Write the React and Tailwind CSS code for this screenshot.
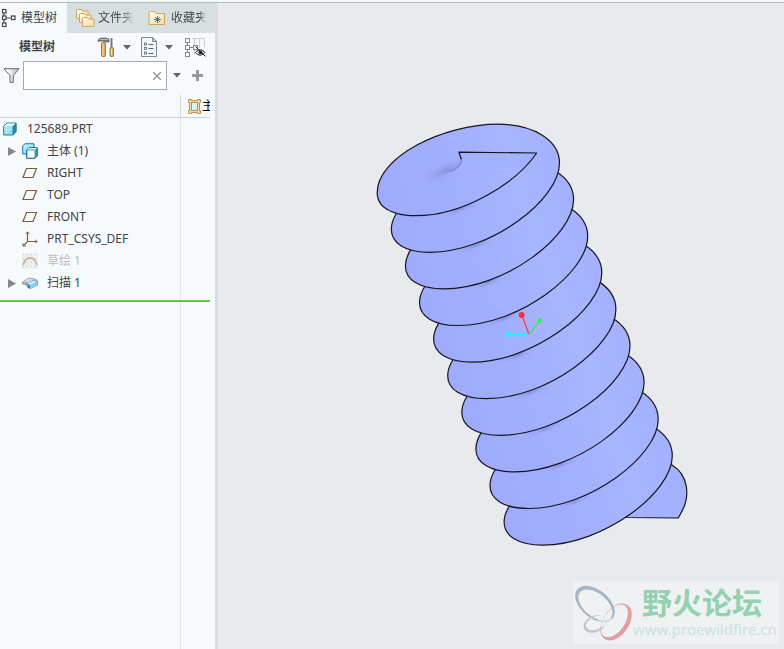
import React from "react";

const Caret = () => (
  <svg viewBox="0 0 8 5" className="h-[5px] w-2 shrink-0" fill="#5e6367">
    <path d="M0 0h8L4 4.500z" />
  </svg>
);

const TreeTabIcon = () => (
  <svg viewBox="0 0 16 20" className="h-5 w-4 shrink-0" fill="#fff" stroke="#44484b" strokeWidth="1.200">
    <path d="M4 5v3M4 12v3M6 10h5" />
    <rect x="2.500" y="1.500" width="3.500" height="3.500" />
    <rect x="2.500" y="8" width="3.500" height="3.500" />
    <rect x="11.500" y="8" width="3.500" height="3.500" />
    <rect x="2.500" y="15" width="3.500" height="3.500" />
  </svg>
);

const Gold = () => (
  <defs>
    <linearGradient id="gold" x1="0" y1="0" x2="0.6" y2="1">
      <stop offset="0" stopColor="#fffdf2" />
      <stop offset="1" stopColor="#f8e0aa" />
    </linearGradient>
    <linearGradient id="aqua" x1="0" y1="0" x2="1" y2="1">
      <stop offset="0" stopColor="#c5f4fd" />
      <stop offset="1" stopColor="#7cd0ee" />
    </linearGradient>
  </defs>
);

const FoldersIcon = () => (
  <svg viewBox="0 0 20 20" className="size-5 shrink-0" fill="url(#gold)" stroke="#cfa45c" strokeWidth="1">
    <Gold />
    <path d="M1.500 10.500v-8l1-1h4l1 1.500h5.500v7.500z" />
    <path d="M4.500 14.500v-8l1-1h4l1 1.500h5.500v7.500z" />
    <path d="M7.500 18.500v-8l1-1h4l1 1.500h5.500v7.500z" />
  </svg>
);

const FavoriteIcon = () => (
  <svg viewBox="0 0 18 16" className="h-4 w-[18px] shrink-0">
    <path d="M1 14.500V2.500l1-1h5l1 2h8.500v11z" fill="url(#gold)" stroke="#cfa45c" />
    <path d="M9.500 6v7M6 9.500h7M7 7l5 5M12 7l-5 5" stroke="#126a8d" strokeWidth=".8" />
  </svg>
);

const ToolsIcon = () => (
  <svg viewBox="0 0 18 22" className="h-[22px] w-[18px] shrink-0">
    <path d="M1 5.500c0-2.500 2-3.500 4-3.500h4l3 1v3H8L6 5H4z" fill="#747b82" stroke="#4d5256" strokeWidth=".6" />
    <path d="M3 3.500h8" stroke="#b8bec3" />
    <rect x="4.500" y="6.500" width="4" height="14" rx="1" fill="#d9aa5e" stroke="#8b6429" strokeWidth=".8" />
    <path d="M6 7.500v12" stroke="#f8dfa6" />
    <path d="M14.500 2v9" stroke="#747b82" strokeWidth="2" />
    <rect x="13" y="11.500" width="3.500" height="9" rx="1" fill="#d9aa5e" stroke="#8b6429" strokeWidth=".8" />
    <path d="M14.500 13v6" stroke="#f8dfa6" />
  </svg>
);

const ListPageIcon = () => (
  <svg viewBox="0 0 16 20" className="h-5 w-4 shrink-0" fill="none">
    <path d="M.5.500h11l4 4v15H.5z" fill="#f1f8fb" stroke="#81898e" />
    <path d="M11.500.500v4h4z" fill="#cfd6da" stroke="#81898e" />
    <g fill="#fff" stroke="#5c646a" strokeWidth=".8">
      <rect x="3.500" y="6" width="2" height="2" />
      <rect x="3.500" y="10.500" width="2" height="2" />
      <rect x="3.500" y="15" width="2" height="2" />
    </g>
    <path d="M7.500 7.500h5M7.500 11.500h5M7.500 16.500h5" stroke="#5c646a" />
  </svg>
);

const HiddenTreeIcon = () => (
  <svg viewBox="0 0 21 21" className="size-[21px] shrink-0" fill="none">
    <path d="M7 1.500h13M9.500 2v16M14.500 2v9M19.500 2v8" stroke="#cdd0d2" />
    <g stroke="#858a8d" fill="#f7f9fc">
      <path d="M2.500 5v4M2.500 12v4M5 10.500h5" />
      <rect x=".5" y="1.500" width="4" height="4" />
      <rect x=".5" y="8.500" width="4" height="4" />
      <rect x="8.500" y="8.500" width="4" height="4" />
      <rect x=".5" y="15.500" width="4" height="4" />
    </g>
    <path d="M10.500 15.500c2.500-3.500 7-3.500 9.500 0-2.500 3.500-7 3.500-9.500 0z" fill="#dfe2e4" stroke="#222" strokeWidth="1" />
    <circle cx="15.500" cy="15.300" r="1.900" fill="#222" />
    <path d="M10.500 9.500l10 10" stroke="#222" strokeWidth="1" />
  </svg>
);

const FunnelIcon = () => (
  <svg viewBox="0 0 17 15" className="h-[15px] w-[17px] shrink-0">
    <defs>
      <linearGradient id="funnel">
        <stop offset=".2" stopColor="#fff" />
        <stop offset="1" stopColor="#b5babd" />
      </linearGradient>
    </defs>
    <path d="M1 .700h15L10.300 7.500v6.800H7V7.500z" fill="url(#funnel)" stroke="#62686c" />
  </svg>
);

const BodyColumnIcon = () => (
  <svg viewBox="0 0 13 15" className="h-[15px] w-[13px] shrink-0">
    <path d="M.500.500h3v1h6v-1h3v3h-1v8h1v3h-3v-1h-6v1h-3v-3h1v-8h-1z" fill="#f2d9a2" stroke="#a9823f" strokeWidth=".8" />
    <rect x="3.500" y="3.500" width="6" height="8" fill="#d5f4fb" stroke="#a9823f" strokeWidth=".8" />
  </svg>
);

const PartIcon = () => (
  <svg viewBox="0 0 14 14" className="size-[14px] shrink-0" strokeLinejoin="round">
    <path d="M.700 4L4 1h9v8.500L10 13H.700z" fill="url(#aqua)" stroke="#237ca3" />
    <path d="M10 4l3-3v8.500L10 13z" fill="#288cb5" stroke="#1c6b90" strokeWidth=".7" />
    <path d="M1.500 4H10l2.500-2.500H4.500z" fill="#dafaff" />
  </svg>
);

const BodyIcon = () => (
  <svg viewBox="0 0 16 16" className="size-4 shrink-0" strokeLinejoin="round">
    <path d="M.700 3L3 .700h9v8L10 11H.700z" fill="url(#aqua)" stroke="#237ca3" />
    <path d="M4.700 7L7 4.700h8.300V13L13 15.300H4.700z" fill="#3c9dc3" stroke="#1c6b90" />
    <path d="M5 7l2-2h8l-2 2z" fill="#c5f4fd" />
    <rect x="5" y="7" width="8" height="8" fill="#f6feff" stroke="#237ca3" strokeWidth=".7" />
  </svg>
);

const PlaneIcon = () => (
  <svg viewBox="0 0 16 16" className="size-4 shrink-0" fill="none">
    <path d="M4.500 3.500h10l-3.500 9H1z" stroke="#7b5e2c" strokeWidth="1.200" />
  </svg>
);

const CsysIcon = () => (
  <svg viewBox="0 0 16 16" className="size-4 shrink-0" fill="none" stroke="#7b5e2c" strokeWidth="1.200">
    <path d="M5.500 1v9.500H15L5.500 10.500 1 15" />
    <path d="M3.700 3l1.800-2.300L7.300 3M13 8.700l2.300 1.800-2.300 1.800M1 12v3h3" strokeWidth=".8" />
  </svg>
);

const SketchIcon = () => (
  <svg viewBox="0 0 16 16" className="size-4 shrink-0">
    <rect width="16" height="16" fill="#eeeeec" />
    <path d="M1 1.500h15M1 5.500h15M1 9.500h15M1 13.500h15" stroke="#c9c8c2" strokeDasharray="1 3" />
    <path d="M1 12C4 2.500 12 2.500 15 12" fill="none" stroke="#b9b59f" strokeWidth="1.800" />
  </svg>
);

const SweepIcon = () => (
  <svg viewBox="0 0 16 14" className="h-[14px] w-4 shrink-0" strokeLinejoin="round">
    <path d="M.500 6L7 2l6 1 2.500 2v3.500L7.500 12 5 11V9L.500 8z" fill="#a8b0b6" stroke="#848d93" strokeWidth=".7" />
    <path d="M1 6l6-3.500L12.500 3.500 7 6z" fill="#d9dde0" />
    <path d="M4.500 8L11 5l4.500.500V9l-7 3.500-2-1V9z" fill="#89d4ee" stroke="#419abd" strokeWidth=".6" />
    <path d="M5 7.700l6-2.700 4 .500-7 3z" fill="#cdf4fc" />
    <path d="M4.500 8L8 9v3.500l-2-.5V9.700z" fill="#2788ad" />
  </svg>
);

const TREE = [
  { label: "主体 (1)", Icon: BodyIcon, expandable: true },
  { label: "RIGHT", Icon: PlaneIcon },
  { label: "TOP", Icon: PlaneIcon },
  { label: "FRONT", Icon: PlaneIcon },
  { label: "PRT_CSYS_DEF", Icon: CsysIcon },
  { label: "草绘 1", Icon: SketchIcon, muted: true },
  { label: "扫描 1", Icon: SweepIcon, expandable: true },
];

/* One turn of the thread: right flank, front edge and left flank. */
const FLANK =
  "C533 124.2 559.5 140 559.5 163C559.5 200 490 252.3 430 252.3C405 252.3 391.3 243 391.3 229.3C391.3 224 393 219 396.500 213.300";
const TURN = `M498.3 124.2${FLANK}`;
const TOP_TURN = `M396.5 213.3C383.9 209.7 377.2 202.3 377.2 192.7C377.2 157 443 124.2 498.3 124.2${FLANK}`;
const START = "M536.7 153C515.3 184 462.7 215.7 415.900 215.700C408.4 215.700 401.9 214.9 396.500 213.300";
const TURNS = [8, 7, 6, 5, 4, 3, 2, 1, 0];

const Screw = () => (
  <svg viewBox="218 3 566 646" className="block h-full w-full" role="img" aria-label="125689.PRT">
    <defs>
      <linearGradient id="face" gradientUnits="userSpaceOnUse" x1="390" y1="210" x2="560" y2="170">
        <stop offset="0" stopColor="#9fabfc" />
        <stop offset=".35" stopColor="#a1aefd" />
        <stop offset=".75" stopColor="#a8b5ff" />
        <stop offset="1" stopColor="#a4b1ff" />
      </linearGradient>
      <radialGradient id="shade">
        <stop offset="0" stopColor="#6b75bb" stopOpacity=".5" />
        <stop offset=".5" stopColor="#7e89d2" stopOpacity=".2" />
        <stop offset="1" stopColor="#8f9bf0" stopOpacity="0" />
      </radialGradient>
    </defs>
    <g stroke="#15161c" strokeWidth="1.200" strokeLinejoin="round">
      <path d="M645 440L672.300 465.300C688 475 691 496 681 513L678.300 518L627 517.500L610 500Z" fill="#a3b1ff" />
      {TURNS.map((k) => (
        <g key={k} transform={`translate(${(k * 14.1).toFixed(1)} ${(k * 36.6).toFixed(1)})`}>
          <path d={k === 0 ? TOP_TURN : TURN} fill="url(#face)" />
          <ellipse cx="461" cy="209" rx="22" ry="4" transform="rotate(-20 461 209)" fill="url(#shade)" stroke="none" />
        </g>
      ))}
      <path
        d="M536.700 153C515.300 184 462.700 215.700 415.900 215.700C400 215 380 205 381 186C392 150 435 140 459 152Z"
        fill="url(#face)"
        stroke="none"
      />
      <ellipse cx="447" cy="170" rx="30" ry="9" transform="rotate(-24 447 170)" fill="url(#shade)" stroke="none" />
      <path d="M459 152C461 157 463 159 461.500 163C460 168 456 171 448 174C480 172 510 168 527 165L536.700 153Z" fill="#a4b1ff" stroke="none" />
      <path d={START} fill="none" />
      <path d="M536.700 153L459 152.200L461.300 159.500" fill="none" />
      <path d="M461.300 159.500C462 164 457 169 450 171.500" fill="none" stroke="#606cae" strokeWidth=".7" />
    </g>
    <g strokeWidth="1.200">
      <path d="M529 334.500L522 315" stroke="#ff3340" />
      <path d="M529 334.500L540 320.500" stroke="#27ef35" />
      <path d="M529 334.500H508" stroke="#25f3ff" />
      <circle cx="521.700" cy="315" r="3" fill="#ff3030" />
      <circle cx="539.700" cy="320.500" r="2.200" fill="#2df53a" />
      <circle cx="508.300" cy="334.500" r="2.600" fill="#25f3ff" />
    </g>
  </svg>
);

const WatermarkLogo = () => (
  <svg viewBox="0 0 60 60" className="size-[60px] shrink-0" fillRule="evenodd">
    <g transform="rotate(40 22 21)" fill="#a5b6c5">
      <path d="M-1 21a23 14 0 1 0 46 0a23 14 0 1 0-46 0M3 21.500a20 11.500 0 1 0 40 0a20 11.500 0 1 0-40 0" />
    </g>
    <g transform="rotate(-22 22 41)" fill="#bcc6d0">
      <path d="M10 41a12 8 0 1 0 24 0a12 8 0 1 0-24 0M12.500 40.500a11 6.500 0 1 0 22 0a11 6.500 0 1 0-22 0" />
    </g>
    <g transform="rotate(-56 43 39)" fill="#e59ca1">
      <path d="M22.500 39a20.500 13 0 1 0 41 0a20.500 13 0 1 0-41 0M24.500 37a18.500 10.500 0 1 0 37 0a18.500 10.500 0 1 0-37 0" />
    </g>
    <circle cx="32" cy="37" r="7" fill="#eff0f3" opacity=".6" />
  </svg>
);

export default function App() {
  return (
    <div className="flex h-screen flex-col border-t-2 border-[#f5f9fa] bg-[#e8eaee] font-['Noto_Sans','Noto_Sans_CJK_SC',sans-serif] text-xs text-[#414347]">
      <div className="flex min-h-0 flex-1 border-t border-[#b0bfc0]">
        <aside className="flex w-[218px] shrink-0 flex-col border-r-[3px] border-[#d8dfe0] bg-[#f7fafc]">
          <nav className="flex h-[30px] shrink-0 bg-[#d8dfe0]">
            <button className="flex w-[67px] items-center gap-[5px] whitespace-nowrap bg-[#f7fafc]">
              <TreeTabIcon />
              模型树
            </button>
            <button className="flex w-[74px] items-center gap-[3px] whitespace-nowrap pl-2">
              <FoldersIcon />
              <span className="w-9 bg-gradient-to-r from-[#414347] from-60% to-[#d8dfe0] bg-clip-text text-transparent">文件夹</span>
            </button>
            <button className="flex flex-1 items-center gap-1 whitespace-nowrap pl-[7px]">
              <FavoriteIcon />
              <span className="w-9 bg-gradient-to-r from-[#414347] from-80% to-[#d8dfe0] bg-clip-text pl-[1px] text-transparent">收藏夹</span>
            </button>
          </nav>

          <div className="flex h-7 shrink-0 items-center pl-[19px] pr-[9px]">
            <h2 className="flex-1 font-bold">模型树</h2>
            <button aria-label="设置" className="flex items-center gap-2">
              <ToolsIcon />
              <Caret />
            </button>
            <button aria-label="显示" className="ml-[10px] flex items-center gap-2">
              <ListPageIcon />
              <Caret />
            </button>
            <button aria-label="树列" className="ml-3">
              <HiddenTreeIcon />
            </button>
          </div>

          <div className="flex h-[29px] shrink-0 items-center pl-[3px] pr-3">
            <FunnelIcon />
            <div className="ml-[3px] flex h-[29px] min-w-0 flex-1 items-center border border-[#a4abaf] bg-white pr-[5px]">
              <input aria-label="搜索" className="h-full min-w-0 flex-1 bg-transparent px-1 outline-none" />
              <button aria-label="清除">
                <svg viewBox="0 0 8 8" className="size-2" stroke="#8e9295" strokeWidth="1.300">
                  <path d="M0 0l8 8M8 0L0 8" />
                </svg>
              </button>
            </div>
            <button aria-label="搜索选项" className="ml-[6px]">
              <Caret />
            </button>
            <button aria-label="添加" className="ml-[11px]">
              <svg viewBox="0 0 11 11" className="size-[11px]" stroke="#95999c" strokeWidth="3">
                <path d="M5.500 0v11M0 5.500h11" />
              </svg>
            </button>
          </div>

          <div className="mr-[5px] mt-[5px] flex h-[23px] shrink-0 border-b border-[#ced2d4]">
            <div className="flex-1 border-r border-[#d3d8da]" />
            <div className="flex w-[29px] items-center gap-[1px] overflow-hidden pl-[7px] text-black">
              <BodyColumnIcon />
              <span className="w-2 overflow-hidden">主</span>
            </div>
          </div>

          <div className="mr-[5px] flex flex-1 flex-col">
            <div className="flex shrink-0 border-b-2 border-[#62c544] pb-[6px]">
              <ul className="min-w-0 flex-1">
                <li className="flex h-[22px] items-center gap-[10px] pl-[3px]">
                  <PartIcon />
                  125689.PRT
                </li>
                {TREE.map(({ label, Icon, expandable, muted }) => (
                  <li key={label} className={muted ? "flex h-[22px] items-center pl-2 text-[#bdbdbd]" : "flex h-[22px] items-center pl-2"}>
                    <span className="flex w-[14px] shrink-0">
                      {expandable && (
                        <button aria-label="展开">
                          <svg viewBox="0 0 8 9" className="h-[9px] w-2" fill="#858789">
                            <path d="M0 0l8 4.500L0 9z" />
                          </svg>
                        </button>
                      )}
                    </span>
                    <Icon />
                    <span className="ml-[9px] whitespace-nowrap">{label}</span>
                  </li>
                ))}
              </ul>
              <div className="-mb-[6px] w-[30px] border-l border-[#e3e7ea]" />
            </div>
            <div className="flex flex-1">
              <div className="flex-1" />
              <div className="w-[30px] border-l border-[#e3e7ea]" />
            </div>
          </div>
        </aside>

        <main className="relative min-w-0 flex-1">
          <Screw />
          <div className="absolute bottom-[5px] right-[5px] flex h-[62px] w-[206px] items-center bg-[#f0f1f3]">
            <WatermarkLogo />
            <div className="flex flex-col whitespace-nowrap pb-[2px]">
              <span className="pl-[9px] font-['Noto_Sans_CJK_SC',sans-serif] text-[30px] font-bold leading-8 text-[#94d1af]">野火论坛</span>
              <span className="pt-[2px] font-['Noto_Sans',sans-serif] text-[15px] leading-5 text-[#c6e2e2]">www.proewildfire.cn</span>
            </div>
          </div>
        </main>
      </div>
    </div>
  );
}
